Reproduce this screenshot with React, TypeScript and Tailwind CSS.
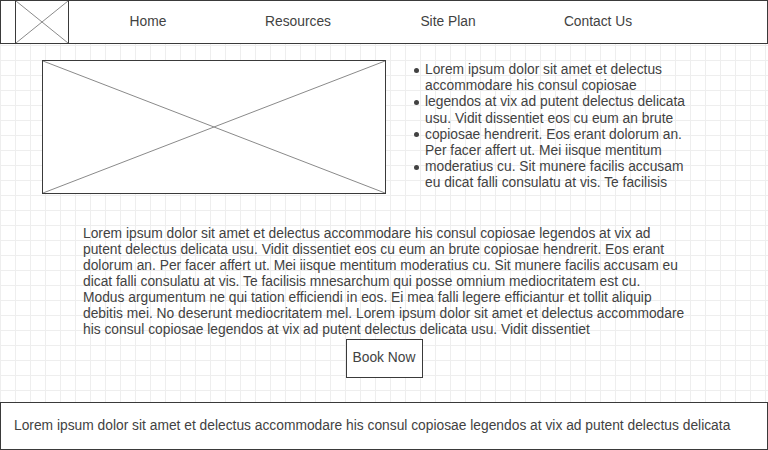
import React from "react";

const font = { fontFamily: '"Liberation Sans", Arial, sans-serif' };

function XBox({ className }: { className: string }) {
  return (
    <div className={className}>
      <svg width="100%" height="100%" viewBox="0 0 100 100" preserveAspectRatio="none" className="block">
        <line x1="0" y1="0" x2="100" y2="100" stroke="#8a8a8a" strokeWidth="1" vectorEffect="non-scaling-stroke" />
        <line x1="100" y1="0" x2="0" y2="100" stroke="#8a8a8a" strokeWidth="1" vectorEffect="non-scaling-stroke" />
      </svg>
    </div>
  );
}

const bullets = [
  ["Lorem ipsum dolor sit amet et delectus", "accommodare his consul copiosae"],
  ["legendos at vix ad putent delectus delicata", "usu. Vidit dissentiet eos cu eum an brute"],
  ["copiosae hendrerit. Eos erant dolorum an.", "Per facer affert ut. Mei iisque mentitum"],
  ["moderatius cu. Sit munere facilis accusam", "eu dicat falli consulatu at vis. Te facilisis"],
];

const para = [
  "Lorem ipsum dolor sit amet et delectus accommodare his consul copiosae legendos at vix ad",
  "putent delectus delicata usu. Vidit dissentiet eos cu eum an brute copiosae hendrerit. Eos erant",
  "dolorum an. Per facer affert ut. Mei iisque mentitum moderatius cu. Sit munere facilis accusam eu",
  "dicat falli consulatu at vis. Te facilisis mnesarchum qui posse omnium mediocritatem est cu.",
  "Modus argumentum ne qui tation efficiendi in eos. Ei mea falli legere efficiantur et tollit aliquip",
  "debitis mei. No deserunt mediocritatem mel. Lorem ipsum dolor sit amet et delectus accommodare",
  "his consul copiosae legendos at vix ad putent delectus delicata usu. Vidit dissentiet",
];

export default function App() {
  return (
    <div
      style={font}
      className="w-[768px] h-[450px] overflow-hidden flex flex-col text-[13.8px] text-[#424242] bg-white bg-[linear-gradient(to_right,#eeeeee_1px,transparent_1px),linear-gradient(to_bottom,#eeeeee_1px,transparent_1px)] bg-[size:15px_15px]"
    >
      <header className="h-[44px] border border-[#3a3a3a] bg-white flex items-stretch">
        <XBox className="ml-[14px] w-[54px] border-l border-r border-[#3a3a3a]" />
        <nav className="ml-[4px] flex items-center">
          {["Home", "Resources", "Site Plan", "Contact Us"].map((n) => (
            <div key={n} className="w-[150px] text-center leading-[16px]">
              {n}
            </div>
          ))}
        </nav>
      </header>

      <section className="mt-[16px] pl-[42px] flex items-start">
        <XBox className="w-[344px] h-[134px] border border-[#3a3a3a] bg-white" />
        <ul className="ml-[26px] mt-[2px] leading-[16.2px]">
          {bullets.map((b, i) => (
            <li key={i} className="flex">
              <span className="w-[13px] h-[16.2px] flex items-center">
                <span className="ml-[2px] w-[5px] h-[5px] rounded-full bg-[#424242]" />
              </span>
              <span className="flex flex-col whitespace-nowrap">
                <span>{b[0]}</span>
                <span>{b[1]}</span>
              </span>
            </li>
          ))}
        </ul>
      </section>

      <div className="mt-[32px] pl-[83px] leading-[16px] flex flex-col whitespace-nowrap">
        {para.map((l, i) => (
          <span key={i}>{l}</span>
        ))}
      </div>

      <div className="mt-[1px] flex justify-center">
        <button className="w-[77px] h-[39px] border border-[#3a3a3a] bg-white text-[13.8px] text-[#424242]">
          Book Now
        </button>
      </div>

      <footer className="mt-[24px] h-[48px] border border-[#3a3a3a] bg-white flex items-center pl-[13px] whitespace-nowrap">
        Lorem ipsum dolor sit amet et delectus accommodare his consul copiosae legendos at vix ad putent delectus delicata
      </footer>
    </div>
  );
}
